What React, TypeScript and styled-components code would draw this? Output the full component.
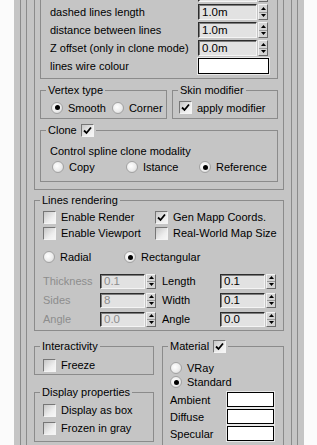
import React from "react";
import styled, { createGlobalStyle } from "styled-components";

const GlobalStyle = createGlobalStyle`
  * { box-sizing: border-box; }
  html, body { margin: 0; padding: 0; background: #fbfbfb; }
  body {
    font-family: "Liberation Sans", Arial, sans-serif;
    font-size: 11px;
    color: #000;
    overflow: hidden;
  }
`;

const Page = styled.div`
  height: 445px;
  padding-left: 14px;
  overflow: hidden;
`;

const Panel = styled.div`
  width: 290px;
  height: 445px;
  background: #c5c5c5;
  padding: 0 6px;
  overflow: hidden;
`;

const Frame = styled.div`
  height: 100%;
  border-left: 1px solid #8b8b8b;
  border-right: 1px solid #8b8b8b;
  padding: 0 5px;
  display: flex;
  flex-direction: column;
`;

const Inner = styled.div`
  flex: 1;
  border-left: 1px solid #8b8b8b;
  border-right: 1px solid #8b8b8b;
  padding: 0 7px;
  display: flex;
  flex-direction: column;
`;

// the rollout is scrolled: its first row sits just above the window
const Content = styled.div`
  margin-top: -24px;
  display: flex;
  flex-direction: column;
`;

const OuterGroup = styled.div`
  border: 1px solid #8b8b8b;
  padding: 4px 5px 7px;
`;

const LinesBox = styled.div`
  border: 1px solid #8b8b8b;
  padding: 3px 0 3px 9px;
`;

const ParamRow = styled.div`
  display: grid;
  grid-template-columns: 148px auto;
  align-items: center;
  height: 18px;
`;

const Text = styled.span<{ $disabled?: boolean }>`
  white-space: nowrap;
  color: ${(p) => (p.$disabled ? "#8d8d8d" : "#000")};
`;

// spinner
const SpinWrap = styled.div<{ $h: number }>`
  display: flex;
  gap: 1px;
  height: ${(p) => p.$h}px;
`;

const Field = styled.div<{ $w: number; $disabled?: boolean }>`
  width: ${(p) => p.$w}px;
  height: 100%;
  background: #e2e2e2;
  border: 1px solid;
  border-color: #2c2c2c #f4f4f4 #f4f4f4 #2c2c2c;
  box-shadow: inset 1px 1px 0 #7c7c7c;
  padding-left: 3px;
  display: flex;
  align-items: center;
  font-size: 11.5px;
  color: ${(p) => (p.$disabled ? "#8d8d8d" : "#000")};
`;

const Arrows = styled.div`
  width: 10px;
  height: 100%;
  display: flex;
  flex-direction: column;
  border: 1px solid;
  border-color: #f2f2f2 #6a6a6a #6a6a6a #f2f2f2;
  background: #d4d4d4;
`;

const ArrowHalf = styled.div<{ $down?: boolean }>`
  flex: 1;
  display: flex;
  align-items: center;
  justify-content: center;
  border-top: ${(p) => (p.$down ? "1px solid #9a9a9a" : "none")};
`;

const Swatch = styled.div<{ $w: number; $h: number }>`
  width: ${(p) => p.$w}px;
  height: ${(p) => p.$h}px;
  background: #fff;
  border: 1px solid #000;
  box-shadow: 0 0 0 1px #e8e8e8;
`;

// groups
const Group = styled.fieldset<{ $w?: number; $mt?: number }>`
  margin: ${(p) => p.$mt ?? 0}px 0 0 0;
  padding: 0;
  min-width: 0;
  border: 1px solid #8b8b8b;
  width: ${(p) => (p.$w ? `${p.$w}px` : "auto")};
  flex: ${(p) => (p.$w ? "none" : "1")};
`;

const Legend = styled.legend`
  margin-left: 5px;
  padding: 0 2px;
  height: 13px;
  line-height: 13px;
  display: flex;
  align-items: center;
  gap: 4px;
`;

const GroupBody = styled.div<{ $pad: string }>`
  padding: ${(p) => p.$pad};
`;

const TwoCols = styled.div`
  display: flex;
  gap: 5px;
  margin-top: 5px;
`;

const InlineOptions = styled.div`
  display: flex;
  align-items: center;
  gap: 6px;
  height: 17px;
`;

const Option = styled.div<{ $h?: number }>`
  display: flex;
  align-items: center;
  gap: 5px;
  height: ${(p) => p.$h ?? 16}px;
  white-space: nowrap;
`;

const RadioDot = styled.span<{ $on?: boolean }>`
  flex: none;
  width: 12px;
  height: 12px;
  border-radius: 50%;
  border: 1px solid #a2a2a2;
  background: radial-gradient(circle at 40% 40%, #ffffff 0%, #ececec 55%, #c8c8c8 100%);
  display: flex;
  align-items: center;
  justify-content: center;
  &::after {
    content: "";
    display: ${(p) => (p.$on ? "block" : "none")};
    width: 5px;
    height: 5px;
    border-radius: 50%;
    background: #000;
  }
`;

const CheckBox = styled.span`
  flex: none;
  width: 13px;
  height: 13px;
  border: 1px solid;
  border-color: #767676 #f4f4f4 #f4f4f4 #767676;
  background: linear-gradient(135deg, #c6c6c6 0%, #eeeeee 65%, #f6f6f6 100%);
  display: flex;
  align-items: center;
  justify-content: center;
`;

const ModalityText = styled.div`
  height: 14px;
  line-height: 14px;
`;

const CloneRadios = styled.div`
  display: grid;
  grid-template-columns: 74px 73px auto;
  margin-top: 2px;
  padding-left: 2px;
`;

const CheckGrid = styled.div`
  display: grid;
  grid-template-columns: 112px auto;
  grid-auto-rows: 16px;
`;

const ShapeRadios = styled.div`
  display: grid;
  grid-template-columns: 81px auto;
  margin-top: 8px;
`;

const SpinGrid = styled.div`
  display: grid;
  grid-template-columns: 57px 56px 6px 58px 56px;
  grid-auto-rows: 16px;
  row-gap: 3px;
  align-items: center;
  margin-top: 8px;
`;

const BottomRow = styled.div`
  display: flex;
  gap: 8px;
  margin-top: 9px;
  align-items: flex-start;
`;

const LeftCol = styled.div`
  width: 120px;
  flex: none;
  display: flex;
  flex-direction: column;
`;

const StackRows = styled.div`
  display: flex;
  flex-direction: column;
  gap: 4px;
`;

const SwatchGrid = styled.div`
  display: grid;
  grid-template-columns: 57px 47px;
  grid-auto-rows: 15px;
  row-gap: 2px;
  align-items: center;
  margin-top: 3px;
`;

const Tri = ({ down }: { down?: boolean }) => (
  <svg width="5" height="3" viewBox="0 0 5 3">
    <path d={down ? "M0 0 L5 0 L2.5 3 Z" : "M0 3 L5 3 L2.5 0 Z"} fill="#000" />
  </svg>
);

const Spinner = ({ value, w, h, disabled }: { value: string; w: number; h: number; disabled?: boolean }) => (
  <SpinWrap $h={h}>
    <Field $w={w} $disabled={disabled}>{value}</Field>
    <Arrows>
      <ArrowHalf><Tri /></ArrowHalf>
      <ArrowHalf $down><Tri down /></ArrowHalf>
    </Arrows>
  </SpinWrap>
);

const Check = ({ on }: { on?: boolean }) => (
  <CheckBox>
    {on && (
      <svg width="9" height="9" viewBox="0 0 9 9">
        <path d="M1 4.5 L3.5 7 L8 1.5" stroke="#000" strokeWidth="1.8" fill="none" />
      </svg>
    )}
  </CheckBox>
);

const Radio = ({ label, on, h }: { label: string; on?: boolean; h?: number }) => (
  <Option $h={h}>
    <RadioDot $on={on} />
    <Text>{label}</Text>
  </Option>
);

const CheckOption = ({ label, on, h }: { label: string; on?: boolean; h?: number }) => (
  <Option $h={h}>
    <Check on={on} />
    <Text>{label}</Text>
  </Option>
);

// first entry is scrolled out of view, only its field's lower edge shows
const lineParams = [
  { label: "", value: "" },
  { label: "dashed lines length", value: "1.0m" },
  { label: "distance between lines", value: "1.0m" },
  { label: "Z offset (only in clone mode)", value: "0.0m" },
];

const renderParams = [
  { left: "Thickness", lv: "0.1", right: "Length", rv: "0.1" },
  { left: "Sides", lv: "8", right: "Width", rv: "0.1" },
  { left: "Angle", lv: "0.0", right: "Angle", rv: "0.0" },
];

export default function App() {
  return (
    <Page>
      <GlobalStyle />
      <Panel>
        <Frame>
          <Inner>
            <Content>
              <OuterGroup>
                <LinesBox>
                  {lineParams.map((p, i) => (
                    <ParamRow key={i}>
                      <Text>{p.label}</Text>
                      <Spinner value={p.value} w={59} h={16} />
                    </ParamRow>
                  ))}
                  <ParamRow>
                    <Text>lines wire colour</Text>
                    <Swatch $w={71} $h={16} />
                  </ParamRow>
                </LinesBox>

                <TwoCols>
                  <Group $w={127}>
                    <Legend>Vertex type</Legend>
                    <GroupBody $pad="2px 0 2px 10px">
                      <InlineOptions>
                        <Radio label="Smooth" on />
                        <Radio label="Corner" />
                      </InlineOptions>
                    </GroupBody>
                  </Group>
                  <Group>
                    <Legend>Skin modifier</Legend>
                    <GroupBody $pad="2px 0 2px 6px">
                      <InlineOptions>
                        <CheckOption label="apply modifier" on />
                      </InlineOptions>
                    </GroupBody>
                  </Group>
                </TwoCols>

                <Group $mt={5}>
                  <Legend>
                    Clone <Check on />
                  </Legend>
                  <GroupBody $pad="7px 0 7px 9px">
                    <ModalityText>Control spline clone modality</ModalityText>
                    <CloneRadios>
                      <Radio label="Copy" h={14} />
                      <Radio label="Istance" h={14} />
                      <Radio label="Reference" on h={14} />
                    </CloneRadios>
                  </GroupBody>
                </Group>
              </OuterGroup>

              <Group $mt={4}>
                <Legend>Lines rendering</Legend>
                <GroupBody $pad="2px 0 3px 8px">
                  <CheckGrid>
                    <CheckOption label="Enable Render" />
                    <CheckOption label="Gen Mapp Coords." on />
                    <CheckOption label="Enable Viewport" />
                    <CheckOption label="Real-World Map Size" />
                  </CheckGrid>
                  <ShapeRadios>
                    <Radio label="Radial" />
                    <Radio label="Rectangular" on />
                  </ShapeRadios>
                  <SpinGrid>
                    {renderParams.map((r) => (
                      <React.Fragment key={r.left + r.right}>
                        <Text $disabled>{r.left}</Text>
                        <Spinner value={r.lv} w={46} h={15} disabled />
                        <span />
                        <Text>{r.right}</Text>
                        <Spinner value={r.rv} w={46} h={15} />
                      </React.Fragment>
                    ))}
                  </SpinGrid>
                </GroupBody>
              </Group>

              <BottomRow>
                <LeftCol>
                  <Group>
                    <Legend>Interactivity</Legend>
                    <GroupBody $pad="5px 0 2px 8px">
                      <CheckOption label="Freeze" h={14} />
                    </GroupBody>
                  </Group>
                  <Group $mt={11}>
                    <Legend>Display properties</Legend>
                    <GroupBody $pad="4px 0 6px 8px">
                      <StackRows>
                        <CheckOption label="Display as box" h={14} />
                        <CheckOption label="Frozen in gray" h={14} />
                      </StackRows>
                    </GroupBody>
                  </Group>
                </LeftCol>
                <Group>
                  <Legend>
                    Material <Check on />
                  </Legend>
                  <GroupBody $pad="8px 0 8px 7px">
                    <Radio label="VRay" h={14} />
                    <Radio label="Standard" on h={14} />
                    <SwatchGrid>
                      <Text>Ambient</Text>
                      <Swatch $w={47} $h={15} />
                      <Text>Diffuse</Text>
                      <Swatch $w={47} $h={15} />
                      <Text>Specular</Text>
                      <Swatch $w={47} $h={15} />
                    </SwatchGrid>
                  </GroupBody>
                </Group>
              </BottomRow>
            </Content>
          </Inner>
        </Frame>
      </Panel>
    </Page>
  );
}
